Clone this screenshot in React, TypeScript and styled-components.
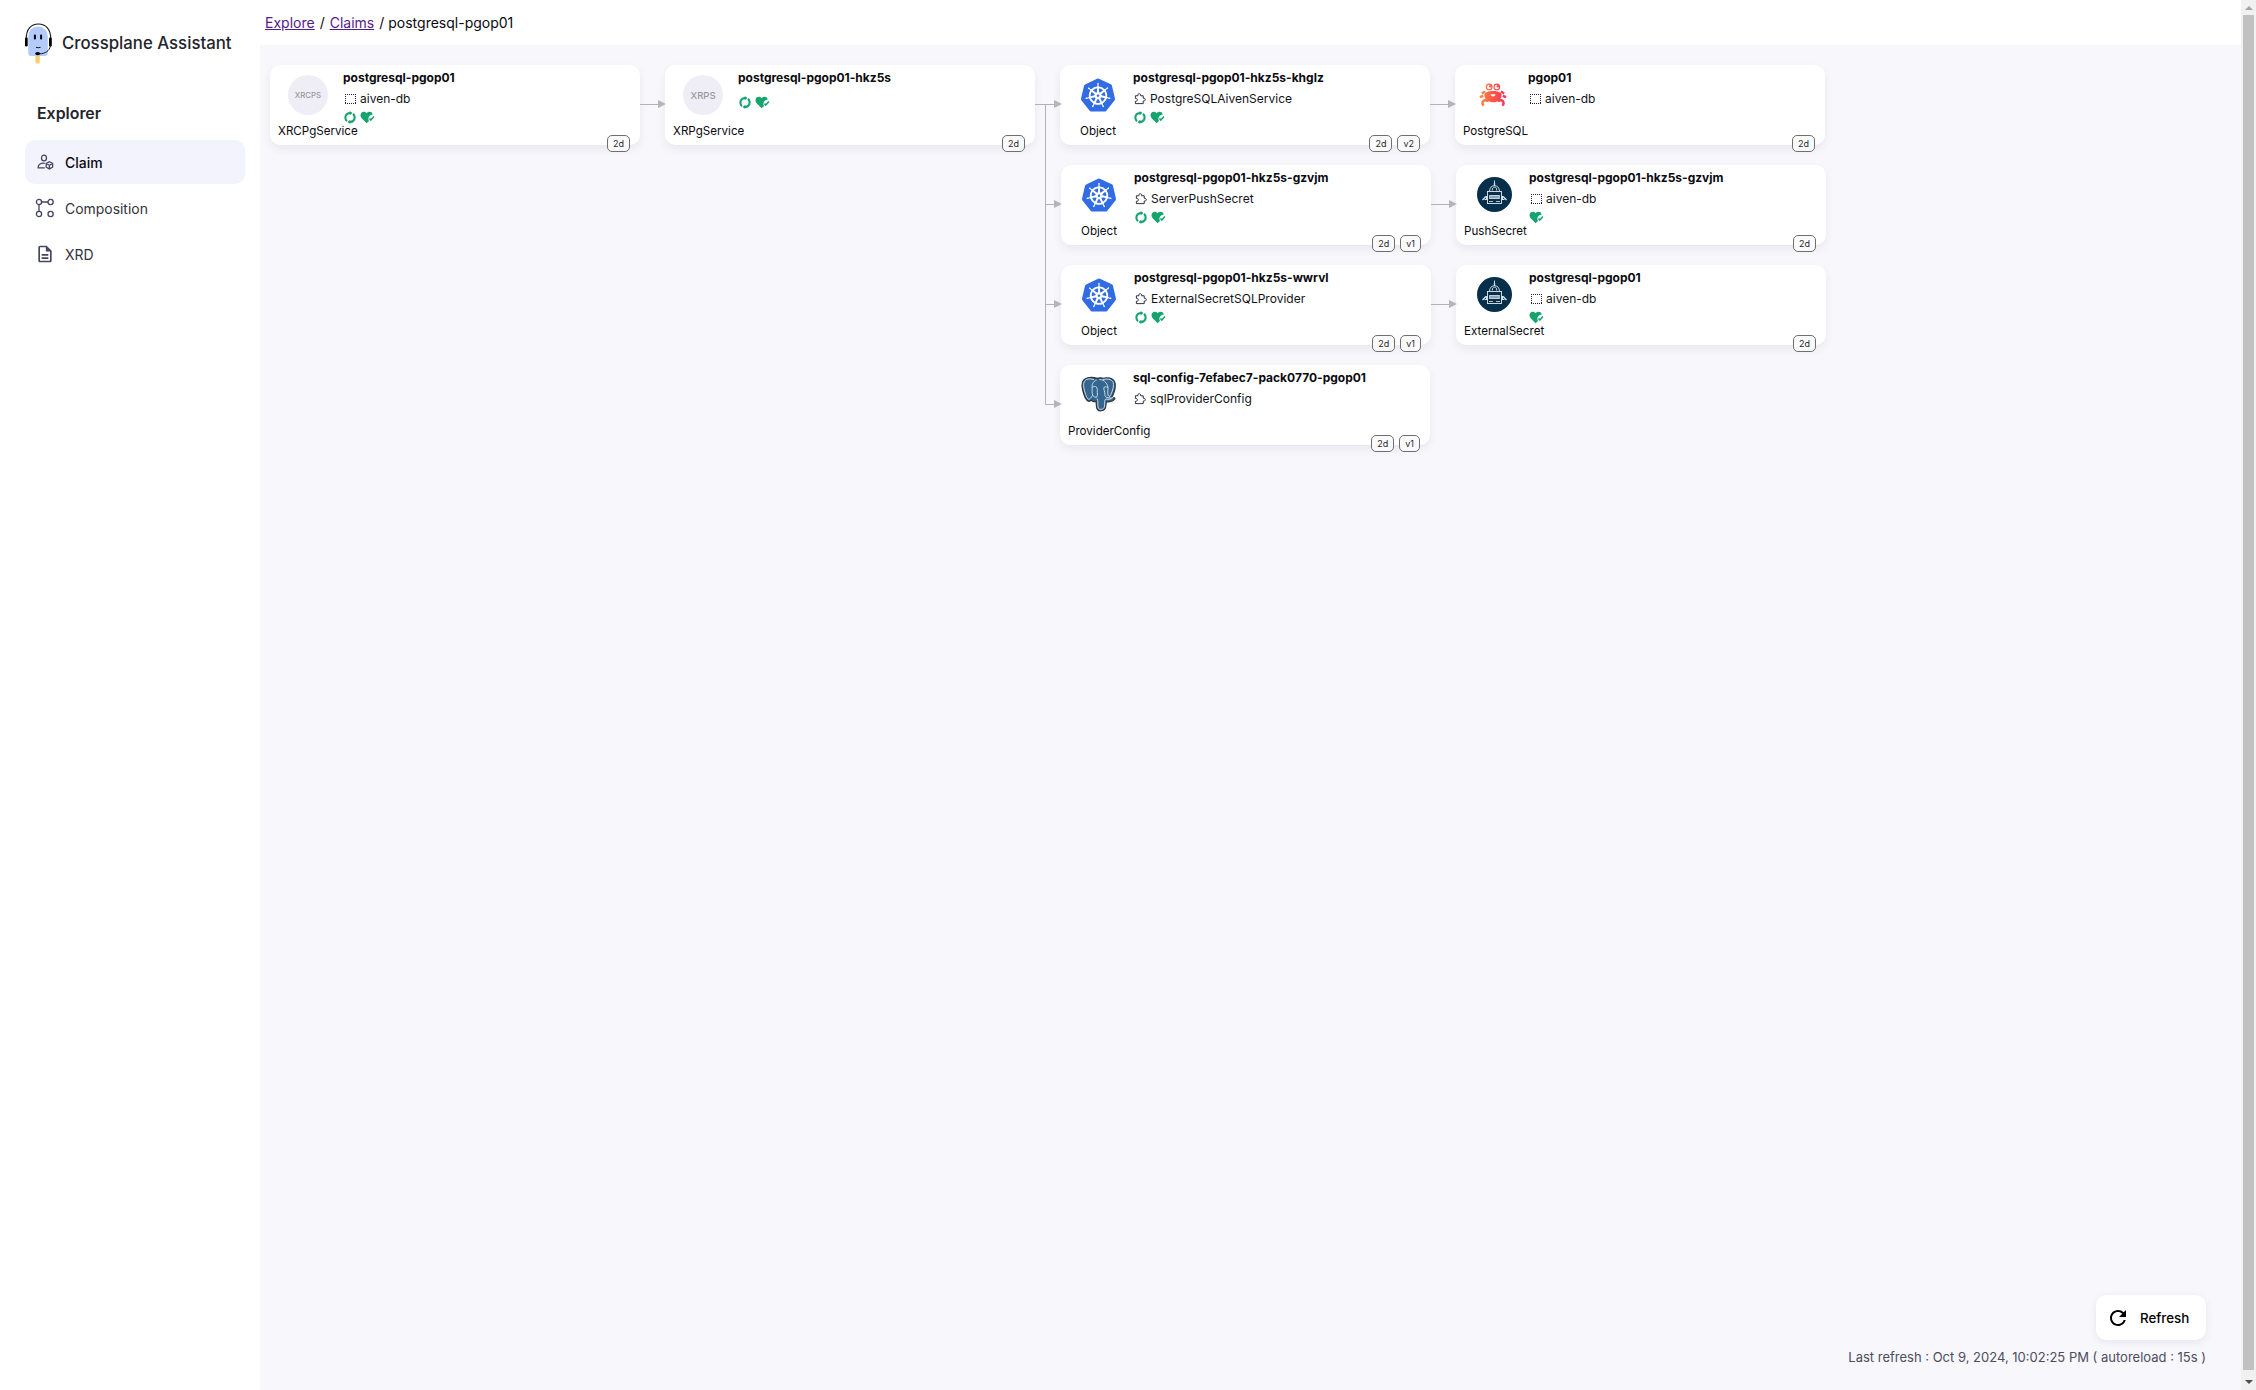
import React from "react";
import styled, { createGlobalStyle } from "styled-components";
import { SiKubernetes } from "react-icons/si";
import { MdOutlineDescription, MdRefresh } from "react-icons/md";

const GlobalStyle = createGlobalStyle`
  *, *::before, *::after { box-sizing: border-box; }
  body {
    margin: 0;
    background: #ffffff;
    color: #0a0a0f;
    font-family: Inter, "Liberation Sans", sans-serif;
    overflow: hidden;
  }
`;

const NODE_WIDTH = 370;
const NODE_HEIGHT = 80;
const CANVAS_TOP = 45;
const CANVAS_LEFT = 260;

/* ---------- layout ---------- */

const Shell = styled.div`
  display: grid;
  grid-template-columns: 260px minmax(0, 1fr) 15px;
  height: 100vh;
`;

const Sidebar = styled.aside`
  display: flex;
  flex-direction: column;
  padding: 22px 15px 0 25px;
  background: #ffffff;
`;

const Brand = styled.div`
  display: flex;
  align-items: center;
  gap: 10px;
  height: 42px;
  font-size: 16.8px;
  font-weight: 500;
  line-height: 42px;
  color: #24242c;
  white-space: nowrap;
`;

const SectionTitle = styled.h2`
  margin: 38px 0 0;
  padding-left: 12px;
  font-size: 15.9px;
  font-weight: 600;
  line-height: 24px;
  color: #24242c;
`;

const Menu = styled.nav`
  display: flex;
  flex-direction: column;
  gap: 2px;
  margin-top: 14px;
`;

const MenuItem = styled.a<{ $active?: boolean }>`
  display: flex;
  align-items: center;
  gap: 10px;
  height: 44px;
  padding-left: 10px;
  border-radius: 10px;
  background: ${(p) => (p.$active ? "#f2f3fd" : "transparent")};
  color: ${(p) => (p.$active ? "#0a0a0f" : "#33333d")};
  font-size: 13.95px;
  font-weight: ${(p) => (p.$active ? 500 : 400)};
`;

const MenuLabel = styled.span`
  padding-top: 1px;
`;

const MenuIcon = styled.span`
  display: flex;
  align-items: center;
  justify-content: center;
  width: 20px;
  height: 20px;
  color: #44465f;
`;

const Main = styled.main`
  display: flex;
  flex-direction: column;
  min-width: 0;
`;

const TopBar = styled.header`
  display: flex;
  flex: none;
  align-items: flex-start;
  height: 45px;
  padding: 14px 0 0 5px;
  font-size: 14px;
  line-height: 18px;
  white-space: pre;
`;

const Crumb = styled.a`
  color: #551a8b;
  text-decoration: underline;
`;

const Separator = styled.span<{ $tight?: boolean }>`
  margin: ${(p) => (p.$tight ? "0 4px 0 5px" : "0 5px")};
`;

const Canvas = styled.section`
  position: relative;
  display: flex;
  flex: 1;
  flex-direction: column;
  align-items: flex-end;
  justify-content: flex-end;
  gap: 9px;
  padding: 0 35px 25px 0;
  background: #f7f7fc;
`;

const EdgeLayer = styled.svg`
  position: absolute;
  inset: 0;
  width: 100%;
  height: 100%;
  pointer-events: none;
`;

/* ---------- nodes ---------- */

const Node = styled.article<{ $x: number; $y: number }>`
  position: absolute;
  left: ${(p) => p.$x - CANVAS_LEFT}px;
  top: ${(p) => p.$y - CANVAS_TOP}px;
  display: flex;
  gap: 5px;
  width: ${NODE_WIDTH}px;
  height: ${NODE_HEIGHT}px;
  padding: 0 8px;
  border-radius: 10px;
  background: #ffffff;
  box-shadow: 0 4px 10px rgba(20, 20, 50, 0.065);
`;

const Identity = styled.div`
  display: flex;
  flex: none;
  flex-direction: column;
  width: 60px;
  padding-top: 10px;
`;

const Figure = styled.div<{ $raised?: boolean }>`
  display: flex;
  align-items: center;
  justify-content: center;
  height: 40px;
  padding-bottom: ${(p) => (p.$raised ? 2 : 0)}px;
`;

const Avatar = styled.span<{ $size: number }>`
  display: flex;
  align-items: center;
  justify-content: center;
  width: 40px;
  height: 40px;
  border-radius: 50%;
  background: #efeef7;
  color: #98989c;
  font-size: ${(p) => p.$size}px;
  font-weight: 500;
`;

const Kind = styled.span`
  margin-top: 8px;
  font-size: 11.6px;
  line-height: 16px;
  text-align: center;
  white-space: nowrap;
`;

const Details = styled.div`
  display: flex;
  flex-direction: column;
  align-items: flex-start;
  padding-top: 5px;
  white-space: nowrap;
`;

const Name = styled.strong`
  font-size: 12px;
  font-weight: 700;
  line-height: 16px;
`;

const Scope = styled.span`
  display: flex;
  align-items: center;
  gap: 4px;
  height: 16px;
  margin-top: 5px;
  padding-left: 1px;
  font-size: 12px;
  line-height: 16px;
  color: #121217;
`;

const ScopeIcon = styled.span`
  display: flex;
  align-items: center;
  width: 12px;
  height: 16px;
  color: #1f2030;
`;

const Conditions = styled.span<{ $alone?: boolean }>`
  display: flex;
  gap: 4px;
  height: 13px;
  margin-top: ${(p) => (p.$alone ? 10 : 4)}px;
  color: #15a36e;
`;

const Badges = styled.div`
  position: absolute;
  right: 10px;
  bottom: -7px;
  display: flex;
  gap: 5px;
`;

const Badge = styled.span`
  height: 17px;
  padding: 0 5px;
  border: 1px solid #6f6f72;
  border-radius: 5px;
  background: #fafafb;
  color: #26262b;
  font-size: 9px;
  line-height: 15px;
`;

/* ---------- footer ---------- */

const RefreshButton = styled.button`
  display: flex;
  align-items: center;
  gap: 10px;
  width: 110px;
  height: 45px;
  padding: 0 0 0 10px;
  border: 0;
  border-radius: 10px;
  background: #ffffff;
  box-shadow: 0 2px 8px rgba(20, 20, 50, 0.08);
  color: #000000;
  font-family: inherit;
  font-size: 13.333px;
  font-weight: 500;
`;

const RefreshStatus = styled.p`
  margin: 0;
  color: #4c4d60;
  font-size: 13px;
  line-height: 16px;
`;

/* ---------- scrollbar ---------- */

const Scrollbar = styled.div`
  display: flex;
  flex-direction: column;
  align-items: center;
  background: #f1f1f1;
`;

const ScrollThumb = styled.div`
  flex: 1;
  width: 11px;
  background: #c1c1c1;
`;

const ScrollArrow = styled.div<{ $down?: boolean }>`
  display: flex;
  align-items: center;
  justify-content: center;
  width: 15px;
  height: ${(p) => (p.$down ? 20 : 15)}px;
  padding-top: ${(p) => (p.$down ? 4 : 1)}px;

  &::before {
    content: "";
    border: 4px solid transparent;
    border-${(p) => (p.$down ? "top" : "bottom")}-color: ${(p) => (p.$down ? "#505050" : "#a3a3a3")};
    border-${(p) => (p.$down ? "bottom" : "top")}-width: 0;
  }
`;

/* ---------- drawings ---------- */

const AssistantLogo = () => (
  <svg width="27" height="41" viewBox="0 0 27 41">
    <rect x="10.4" y="31" width="4.4" height="9.6" rx="2.2" fill="#ffcb6b" />
    <path d="M3.2 13.2a9.8 9.8 0 0 1 19.6 0V30a3 3 0 0 1-3 3H6.2a3 3 0 0 1-3-3Z" fill="#b4ccfb" />
    <path d="M1.3 16C1 6.500 6 1 13.400 1S25.900 6.500 25.700 16" fill="none" stroke="#15171f" strokeWidth="1.1" />
    <rect x="0" y="14.500" width="2.700" height="9" rx="1.200" fill="#000" />
    <rect x="24" y="14.500" width="2.800" height="9" rx="1.200" fill="#000" />
    <path d="M25.400 23C24.500 28 20 30.700 14.500 30.800" fill="none" stroke="#15171f" strokeWidth="1" />
    <ellipse cx="12.700" cy="30.600" rx="2.500" ry="1.700" fill="#000" />
    <rect x="8.900" y="11.600" width="2" height="5" rx=".8" fill="#000" />
    <rect x="15.100" y="11.600" width="2" height="5" rx=".8" fill="#000" />
    <path d="M11 24.300q2.200.8 4.600 0" fill="none" stroke="#15171f" strokeWidth="1" />
  </svg>
);

const ClaimIcon = () => (
  <svg width="17" height="16" viewBox="0 0 17 16" fill="none" stroke="currentColor" strokeWidth="1.300">
    <ellipse cx="7" cy="4" rx="2.500" ry="2.900" />
    <path d="M7.800 9.300C4 8.800 1.200 10.400 1.200 13.100v.8h6.500" />
    <path d="m12.400 7.800 3.200 1.700v3.700l-3.200 1.700-3.200-1.700V9.500Zm-3.200 1.700 3.200 1.700 3.200-1.700m-3.200 1.700v3.700" />
  </svg>
);

const CompositionIcon = () => (
  <svg width="20" height="20" viewBox="0 0 20 20" fill="none" stroke="currentColor" strokeWidth="1.300">
    <circle cx="4" cy="4" r="2.600" />
    <circle cx="15.600" cy="4" r="2.600" />
    <circle cx="4" cy="16" r="2.600" />
    <circle cx="15.600" cy="16" r="2.600" />
    <path d="M6.600 4H13M4 6.600v6.800" />
  </svg>
);

const NamespaceIcon = () => (
  <svg width="12" height="12" viewBox="0 0 12 12" fill="none" stroke="currentColor">
    <path d="M1 1.500H12M1 10.500H12M1.500 3V10M11.500 3V10" strokeDasharray="1 1" />
  </svg>
);

const PuzzleIcon = () => (
  <svg width="12" height="12" viewBox="0 0 13 13" fill="none" stroke="currentColor" strokeLinejoin="round">
    <path d="M1.500 3h2.700c-.3-1.300.4-2.200 1.500-2.200s1.800.9 1.500 2.200H10v2.700c1.300-.3 2.200.4 2.200 1.500S11.300 9 10 8.700v2.800H1.500V9c1.500.2 2.100-.6 2.100-1.600S3 5.700 1.500 5.800Z" />
  </svg>
);

const SyncedIcon = () => (
  <svg width="13" height="13" viewBox="-.5 0 13 13" fill="none">
    <path
      d="M3.500 10.100A4.750 4.750 0 0 1 3.200 3.200M9.500 2.900A4.750 4.750 0 0 1 9.800 9.800"
      stroke="currentColor"
      strokeWidth="2.100"
    />
    <path
      d="M2.300 2.500A6.200 6.200 0 0 1 6.200.9V0L9 2.100 6.200 4.300V3.200A4 4 0 0 0 3.700 4.200ZM10.700 10.500A6.200 6.200 0 0 1 6.800 12.100V13L4 10.900 6.800 8.700V9.800A4 4 0 0 0 9.300 8.800Z"
      fill="currentColor"
    />
  </svg>
);

const ReadyIcon = () => (
  <svg width="15" height="13" viewBox="0 0 15 13">
    <path
      d="M6.600 12.300 1.900 7.500C.2 5.700.1 3.200 1.400 1.800 2.800.2 5.300.3 6.600 2.200 7.900.4 10.400.2 11.800 1.600c.5.5.8 1.200.9 1.900-2.600.2-4.300 2.100-4.300 4.300 0 .9.200 1.600.6 2.200Z"
      fill="currentColor"
    />
    <path d="m9.500 7.600 1.300 1.500L13.900 5.600" fill="none" stroke="currentColor" strokeWidth="1.500" />
  </svg>
);

const CrabLogo = () => (
  <svg width="28" height="24" viewBox="0 0 28 24">
    <defs>
      <linearGradient id="crab" gradientUnits="userSpaceOnUse" x1="0" x2="28" y1="0" y2="0">
        <stop offset="0" stopColor="#ff8a3c" />
        <stop offset=".55" stopColor="#ff5148" />
        <stop offset="1" stopColor="#fb2e5c" />
      </linearGradient>
    </defs>
    <g fill="url(#crab)">
      <circle cx="10.200" cy="3.900" r="3.400" />
      <circle cx="17.800" cy="3.900" r="3.400" />
      <path d="M5.800 10.500C8 8.500 10.500 8 14 8s6 .5 8.200 2.500c1.300 2.500-.7 6-3.200 7.500-3 1.800-7 1.800-10 0-2.500-1.500-4.500-5-3.200-7.500Z" />
    </g>
    <g fill="none" stroke="url(#crab)" strokeWidth="2.500">
      <path d="M6.200 8.500 2.800 10.500M21.800 8.500 25.200 10.500M4.300 12.800.9 14.200M23.700 12.800 27.100 14.200" />
      <path d="M9 18.600A3 3 0 1 0 4.700 22.600M19 18.600A3 3 0 1 1 23.300 22.600" />
    </g>
    <circle cx="10.200" cy="4" r="2.200" fill="#fff" />
    <circle cx="17.800" cy="4" r="2.200" fill="#fff" />
    <circle cx="11.200" cy="3.300" r="1.200" fill="#ff5a4a" />
    <circle cx="18.800" cy="3.300" r="1.200" fill="#ff4554" />
    <path d="M11.500 11.200h5q-.3 2.200-2.500 2.200t-2.500-2.200Z" fill="#fff" />
  </svg>
);

const VaultRobotLogo = () => (
  <svg width="35" height="35" viewBox="0 0 35 35">
    <circle cx="17.500" cy="17.500" r="17.500" fill="#052f4a" />
    <g fill="none" stroke="#dfe7ec" strokeWidth=".9">
      <path d="M17.500 3.500v5.500M16.600 7h1.800" />
      <path d="M12.600 14c0-3.300 2-5.300 4.900-5.300s4.900 2 4.900 5.300M15.300 13.500c0-2.500.8-3.400 2.200-3.400s2.200.9 2.200 3.400" />
      <rect x="10.500" y="14.500" width="14" height="12" />
      <rect x="12.700" y="18.400" width="9.600" height="3.200" fill="#8fa3b0" strokeWidth=".8" />
      <path
        d="M8.800 19.500 5.500 23M7.500 22.500h2.800M26.200 19.500l3.300 3.500M27.500 22.500h-2.800M9.500 19v4M25.500 19v4"
        strokeWidth="1.200"
      />
      <path d="M12 24.500h4M19 24.500h4" strokeWidth=".8" />
    </g>
  </svg>
);

const ElephantLogo = () => (
  <svg width="35" height="36" viewBox="0 0 35.500 36">
    <path
      d="M7 1.500C2.500 2.300.8 6 1.100 10.300c.3 4 2.500 11.200 4.600 13.700 1.600 1.900 3.300 1.900 4.600.3 1 1.200 3.400 1.700 5 1l.4 5.500c.3 3.200 2 4.700 5 4.200 3.300-.5 4.400-2.500 4.600-5.600l.4-3.700c3.300.5 7-.3 8.500-2.600.7-1.100-.6-1.500-3.200-1.400 2.300-4.200 4.200-10.200 3.600-14.200C33.900 2.500 28.600.6 22.800 2c-2.300-.6-4.600-.6-6.600.1C13.500 1.200 9.800 1 7 1.500Z"
      fill="#336791"
      stroke="#2b3238"
      strokeWidth="1.200"
    />
    <g fill="none" stroke="#cfd8e0" strokeWidth="1" strokeLinecap="round">
      <path d="M12.800 3.300C7.500 1.600 2.300 3 2.600 9.500c.3 3.900 2.400 11 4.200 13.200 1.800 2.200 3.600-1.600 4.600-2.900" />
      <path d="M15.500 4c-3.700 1.200-4.500 4.500-4.200 8 .1 2.400-.5 5 .6 7.200 1 2 3 2.700 4.300 1.600 1-1 .1-4.300.3-6.300.1-1.700-.3-3.700-1.800-4.100-1.100-.3-2.300 0-3.300.8" />
      <path d="M22.500 3.300c5.300-1.300 10.600.2 10.500 5-.1 4.100-1.800 9.600-4.600 13.300" />
      <path d="M19 3.300c4.900-.3 8.600 5.200 8.400 9.200-.1 3.200-.8 4.200.3 7.200" />
      <path d="M27 11.300c-1.500-.9-3.500-.8-3.800.4-.4 2 1.300 4.200 1 6.600-.3 1.900 1.400 3.300 3.600 3.700 1.500.3 3.400.1 4.600-.5-1.400 1.900-4.500 2.200-7.200 1.600-1.600.5-1 4.500-1.300 7.200-.3 1.900-1.300 3.100-3.500 3.300-1.800.2-2.900-.7-3.200-2.400-.4-2.500.4-5.700-.7-8.200" />
    </g>
  </svg>
);

/* ---------- data ---------- */

type Figures = "XRCPS" | "XRPS" | "kubernetes" | "crab" | "vault" | "elephant";

interface Resource {
  x: number;
  y: number;
  figure: Figures;
  kind: string;
  name: string;
  namespace?: string;
  composed?: string;
  synced?: boolean;
  ready?: boolean;
  badges: string[];
}

const resources: Resource[] = [
  { x: 270, y: 65, figure: "XRCPS", kind: "XRCPgService", name: "postgresql-pgop01", namespace: "aiven-db", synced: true, ready: true, badges: ["2d"] },
  { x: 665, y: 65, figure: "XRPS", kind: "XRPgService", name: "postgresql-pgop01-hkz5s", synced: true, ready: true, badges: ["2d"] },
  { x: 1060, y: 65, figure: "kubernetes", kind: "Object", name: "postgresql-pgop01-hkz5s-khglz", composed: "PostgreSQLAivenService", synced: true, ready: true, badges: ["2d", "v2"] },
  { x: 1061, y: 165, figure: "kubernetes", kind: "Object", name: "postgresql-pgop01-hkz5s-gzvjm", composed: "ServerPushSecret", synced: true, ready: true, badges: ["2d", "v1"] },
  { x: 1061, y: 265, figure: "kubernetes", kind: "Object", name: "postgresql-pgop01-hkz5s-wwrvl", composed: "ExternalSecretSQLProvider", synced: true, ready: true, badges: ["2d", "v1"] },
  { x: 1060, y: 365, figure: "elephant", kind: "ProviderConfig", name: "sql-config-7efabec7-pack0770-pgop01", composed: "sqlProviderConfig", badges: ["2d", "v1"] },
  { x: 1455, y: 65, figure: "crab", kind: "PostgreSQL", name: "pgop01", namespace: "aiven-db", badges: ["2d"] },
  { x: 1456, y: 165, figure: "vault", kind: "PushSecret", name: "postgresql-pgop01-hkz5s-gzvjm", namespace: "aiven-db", ready: true, badges: ["2d"] },
  { x: 1456, y: 265, figure: "vault", kind: "ExternalSecret", name: "postgresql-pgop01", namespace: "aiven-db", ready: true, badges: ["2d"] },
];

const edges: { path: string; tip: [number, number] }[] = [
  { path: "M640 104.500H660", tip: [666, 104] },
  { path: "M1035 104.500H1056", tip: [1062, 104] },
  { path: "M1045.500 104V204.500H1056", tip: [1062, 204] },
  { path: "M1045.500 204V304.500H1056", tip: [1062, 304] },
  { path: "M1045.500 304V404.500H1056", tip: [1062, 404] },
  { path: "M1430 104.500H1450", tip: [1456, 104] },
  { path: "M1431 204.500H1451", tip: [1457, 204] },
  { path: "M1431 304.500H1451", tip: [1457, 304] },
];

const ResourceFigure = ({ figure }: { figure: Figures }) => {
  switch (figure) {
    case "kubernetes":
      return <SiKubernetes size={34} color="#326ce5" />;
    case "crab":
      return <CrabLogo />;
    case "vault":
      return <VaultRobotLogo />;
    case "elephant":
      return <ElephantLogo />;
    default:
      return <Avatar $size={figure === "XRCPS" ? 7.8 : 9.5}>{figure}</Avatar>;
  }
};

const ResourceNode = ({ item }: { item: Resource }) => (
  <Node $x={item.x} $y={item.y}>
    <Identity>
      <Figure $raised={item.figure === "vault" || item.figure === "elephant"}>
        <ResourceFigure figure={item.figure} />
      </Figure>
      <Kind>{item.kind}</Kind>
    </Identity>
    <Details>
      <Name>{item.name}</Name>
      {(item.namespace || item.composed) && (
        <Scope>
          <ScopeIcon>{item.namespace ? <NamespaceIcon /> : <PuzzleIcon />}</ScopeIcon>
          {item.namespace ?? item.composed}
        </Scope>
      )}
      {(item.synced || item.ready) && (
        <Conditions $alone={!item.namespace && !item.composed}>
          {item.synced && <SyncedIcon />}
          {item.ready && <ReadyIcon />}
        </Conditions>
      )}
    </Details>
    <Badges>
      {item.badges.map((label) => (
        <Badge key={label}>{label}</Badge>
      ))}
    </Badges>
  </Node>
);

export default function App() {
  return (
    <>
      <GlobalStyle />
      <Shell>
        <Sidebar>
          <Brand>
            <AssistantLogo />
            <span>Crossplane Assistant</span>
          </Brand>
          <SectionTitle>Explorer</SectionTitle>
          <Menu>
            <MenuItem $active>
              <MenuIcon><ClaimIcon /></MenuIcon>
              <MenuLabel>Claim</MenuLabel>
            </MenuItem>
            <MenuItem>
              <MenuIcon><CompositionIcon /></MenuIcon>
              <MenuLabel>Composition</MenuLabel>
            </MenuItem>
            <MenuItem>
              <MenuIcon><MdOutlineDescription size={20} /></MenuIcon>
              <MenuLabel>XRD</MenuLabel>
            </MenuItem>
          </Menu>
        </Sidebar>
        <Main>
          <TopBar>
            <Crumb>Explore</Crumb>
            <Separator>/</Separator>
            <Crumb>Claims</Crumb>
            <Separator $tight>/</Separator>
            <span>postgresql-pgop01</span>
          </TopBar>
          <Canvas>
            {resources.map((item) => (
              <ResourceNode key={`${item.x}-${item.y}`} item={item} />
            ))}
            <EdgeLayer>
              <g transform={`translate(${-CANVAS_LEFT} ${-CANVAS_TOP})`}>
                {edges.map(({ path, tip: [x, y] }) => (
                  <g key={path}>
                    <path d={path} fill="none" stroke="#b1b1b7" />
                    <path d={`M${x} ${y}l-8-4v8Z`} fill="#b5b5b8" />
                  </g>
                ))}
              </g>
            </EdgeLayer>
            <RefreshButton>
              <MdRefresh size={24} />
              Refresh
            </RefreshButton>
            <RefreshStatus>Last refresh : Oct 9, 2024, 10:02:25 PM ( autoreload : 15s )</RefreshStatus>
          </Canvas>
        </Main>
        <Scrollbar>
          <ScrollArrow />
          <ScrollThumb />
          <ScrollArrow $down />
        </Scrollbar>
      </Shell>
    </>
  );
}
